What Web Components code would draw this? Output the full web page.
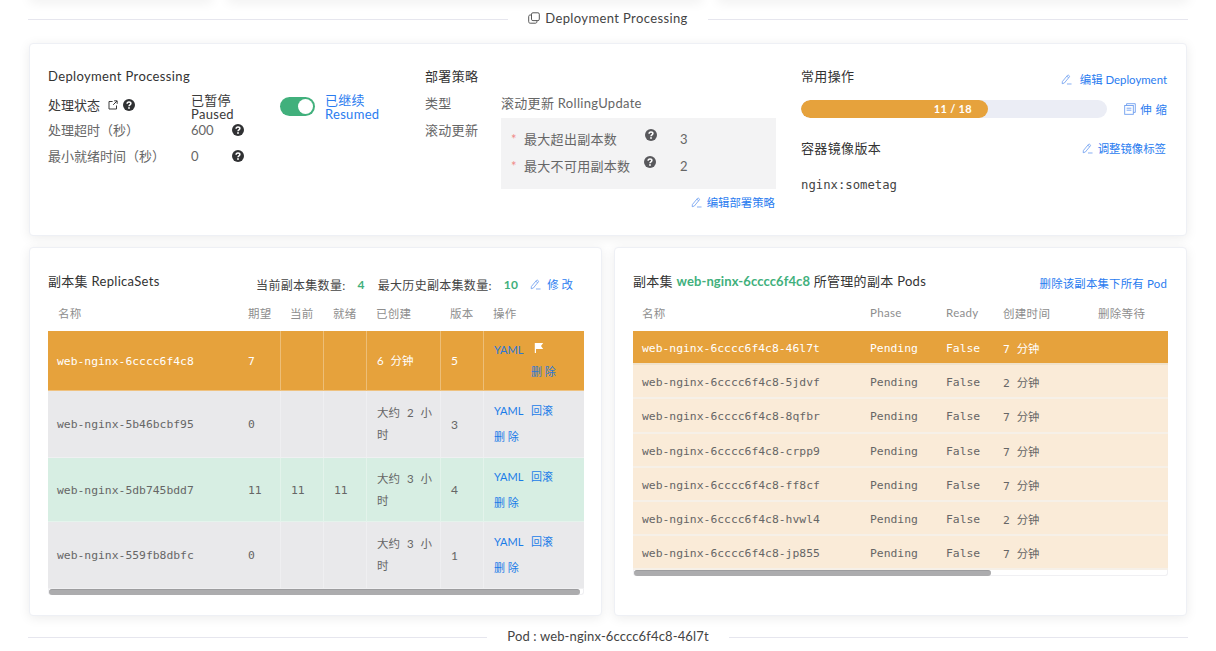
<!DOCTYPE html>
<html lang="zh">
<head>
<meta charset="utf-8">
<title>Deployment Processing</title>
<style>
  html, body {
    margin: 0;
    height: 651px;
    overflow: hidden;
    background: #fff;
    font-family: Lato, "Noto Sans CJK SC", sans-serif;
    font-size: 13px;
    color: #333;
  }
</style>
</head>
<body>
<app-page></app-page>
<script>
const MONO = `"DejaVu Sans Mono", "Noto Sans CJK SC", monospace`;

// Every icon is one line of svg, picked by name
const ICONS = {
  edit: `<svg viewBox="0 0 12 12" fill="none" stroke="currentColor" stroke-width=".9"><path d="M1.5 8.2 7 1.6c.4-.5 1-.5 1.4-.2l.6.5c.4.4.4.9.1 1.3L3.6 9.9l-2.3.7zM6.4 2.4l2 1.7M6.5 10.9h5"/></svg>`,
  copy: `<svg viewBox="0 0 12 12" fill="none" stroke="currentColor" stroke-width=".9"><rect x="3.5" y=".8" width="7.8" height="7.8" rx="1.4"/><path d="M3.5 3H2.2C1.3 3 .7 3.6 .7 4.5v5.2c0 .9.6 1.5 1.5 1.5h5.2c.9 0 1.5-.6 1.5-1.5V8.6"/></svg>`,
  scale: `<svg viewBox="0 0 12 12" fill="none" stroke="currentColor" stroke-width=".9"><rect x=".7" y="2.5" width="8.6" height="8.8"/><path d="M2.6 2.5V.7h8.7v8.7H9.3M2.6 5.2h4.8M2.6 7.2h4.8"/></svg>`,
  ext: `<svg viewBox="0 0 12 12" fill="none" stroke="currentColor" stroke-width="1.2"><path d="M5.5 1.8H1.2v9h9V6.6M6.2 5.8l4.6-4.6M7.4 1h3.6v3.6"/></svg>`,
  flag: `<svg viewBox="0 0 10 10"><path fill="currentColor" d="M.8 0h8.4L7 3l2.2 3H2v4H.8z"/></svg>`,
  help: `<svg viewBox="0 0 12 12"><circle cx="6" cy="6" r="6" fill="currentColor"/><path fill="none" stroke="#fff" stroke-width="1.5" d="M4.1 4.7c0-1.1.8-1.8 1.9-1.8s1.9.7 1.9 1.6c0 1.3-1.9 1.4-1.9 2.7"/><circle cx="6" cy="9" r=".9" fill="#fff"/></svg>`,
};

class UiIcon extends HTMLElement {
  constructor() {
    super();
    this.attachShadow({ mode: 'open' });
    const size = this.getAttribute('size') || 12;
    this.shadowRoot.innerHTML = `
      <style>
        :host { display: inline-flex; flex: none; width: ${size}px; height: ${size}px; }
        svg { width: 100%; height: 100%; display: block; }
      </style>
      ${ICONS[this.getAttribute('name')]}`;
  }
}

class ActionLink extends HTMLElement {
  constructor() {
    super();
    this.attachShadow({ mode: 'open' });
    const name = this.getAttribute('icon') || 'edit';
    const gap = this.getAttribute('gap') || 5;
    this.shadowRoot.innerHTML = `
      <style>
        :host {
          display: inline-flex;
          align-items: center;
          height: 18px;
          font-size: 11.4px;
          color: #2a7cf0;
          white-space: nowrap;
          cursor: pointer;
        }
        ui-icon { color: #6f9ff0; margin-right: ${gap}px; }
      </style>
      <ui-icon name="${name}" size="${name === 'edit' ? 11 : 12}"></ui-icon><slot></slot>`;
  }
}

const dividerTemplate = document.createElement('template');
dividerTemplate.innerHTML = `
<style>
  :host {
    display: flex;
    align-items: center;
    gap: 20px;
    height: 38px;
    color: #444;
    font-size: 13px;
    letter-spacing: .38px;
    white-space: nowrap;
  }
  i { flex: 1; height: 1px; background: #e6e6ee; }
  span { display: inline-flex; align-items: center; gap: 5px; padding-bottom: 2px; }
</style>
<i></i><span><slot></slot></span><i></i>`;

class PageDivider extends HTMLElement {
  constructor() {
    super();
    this.attachShadow({ mode: 'open' });
    this.shadowRoot.appendChild(dividerTemplate.content.cloneNode(true));
  }
}

const cardTemplate = document.createElement('template');
cardTemplate.innerHTML = `
<style>
  :host {
    display: block;
    box-sizing: border-box;
    background: #fff;
    border: 1px solid #eef0f5;
    border-radius: 4px;
    box-shadow: 0 2px 12px 0 rgba(0, 0, 0, .08);
  }
</style>
<slot></slot>`;

class AppCard extends HTMLElement {
  constructor() {
    super();
    this.attachShadow({ mode: 'open' });
    this.shadowRoot.appendChild(cardTemplate.content.cloneNode(true));
  }
}

const panelTemplate = document.createElement('template');
panelTemplate.innerHTML = `
<style>
  :host {
    display: grid;
    grid-template-columns: 377px 376px 366px;
    padding: 23px 0 0 18px;
    height: 191px;
    box-sizing: border-box;
    color: #666;
  }
  h4 { margin: 0; font-size: 13px; font-weight: 400; line-height: 18px; height: 18px; color: #333; letter-spacing: .36px; }
  .row { display: flex; align-items: center; height: 20px; }
  .label { width: 143px; margin-bottom: 2px; }
  .status { height: 27px; margin-top: 8px; color: #3a3a3a; }
  .status .label { display: flex; align-items: center; margin-bottom: 4px; }
  .status .label ui-icon { margin-left: 5px; }
  .status .label ui-icon:first-of-type { margin-left: 8px; }
  .pair { width: 89px; line-height: 14px; letter-spacing: .3px; }
  .pair small { display: block; font-size: 13px; }
  .value { width: 41px; }
  .switch { width: 35px; height: 19px; border-radius: 10px; background: #41b07c; display: flex; align-items: center; justify-content: flex-end; padding-right: 2px; box-sizing: border-box; margin-right: 10px; }
  .switch b { width: 15px; height: 15px; border-radius: 50%; background: #fff; }
  .resumed { color: #2a7cf0; line-height: 14px; letter-spacing: .3px; }
  .resumed small { display: block; font-size: 13px; }
  .gap { margin-top: 6px; }
  ui-icon[name=help] { color: #303133; }

  .kv { display: grid; grid-template-columns: 76px 275px; margin-top: 8px; }
  .kv > div { line-height: 20px; letter-spacing: .3px; }
  .kv .strategy { margin-top: 5px; grid-column: 2; grid-row: 2; }
  .kv .strategy-label { grid-row: 2; margin-top: 7px; }
  .strategy { background: #f3f3f4; padding: 7px 0 10px 10px; box-sizing: border-box; height: 71px; }
  .field { display: flex; align-items: center; height: 27px; }
  .field em { width: 13px; color: #f08a8a; font-style: normal; font-size: 13px; }
  .field span { width: 121px; }
  .field ui-icon { color: #58585c; margin-bottom: 8px; margin-right: 23px; }
  .field + .field ui-icon { margin-left: -1px; margin-right: 24px; }
  .edit-strategy { display: flex; justify-content: flex-end; width: 350px; margin-top: 4px; }

  .head { display: flex; justify-content: space-between; align-items: flex-start; }
  .head action-link { margin-top: 3px; }
  .one { height: 33px; }
  .bar-row { align-items: flex-start; height: 18px; }
  .bar { width: 306px; height: 18px; border-radius: 9px; background: #ebedf5; overflow: hidden; }
  .fill { width: 61.1%; height: 100%; border-radius: 9px; background: #e6a23c; color: #fff; font-size: 11px; font-weight: 700; letter-spacing: .3px; line-height: 18px; text-align: right; padding-right: 16px; box-sizing: border-box; }
  .bar-row action-link { margin-top: 0; }
  .two { margin-top: 21px; }
  .two action-link { margin-top: 0; margin-right: 1px; }
  .image { font-family: ${MONO}; font-size: 12.25px; line-height: 18px; margin-top: 19px; color: #444; }
  .spaced { word-spacing: 1px; }
</style>
<div>
  <h4>Deployment Processing</h4>
  <div class="row status">
    <div class="label">处理状态<ui-icon name="ext" size="10"></ui-icon><ui-icon name="help"></ui-icon></div>
    <div class="pair">已暂停<small>Paused</small></div>
    <div class="switch"><b></b></div>
    <div class="resumed">已继续<small>Resumed</small></div>
  </div>
  <div class="row"><div class="label">处理超时（秒）</div><div class="value">600</div><ui-icon name="help"></ui-icon></div>
  <div class="row gap"><div class="label">最小就绪时间（秒）</div><div class="value">0</div><ui-icon name="help"></ui-icon></div>
</div>
<div>
  <h4>部署策略</h4>
  <div class="kv">
    <div>类型</div>
    <div>滚动更新 RollingUpdate</div>
    <div class="strategy-label">滚动更新</div>
    <div class="strategy">
      <div class="field"><em>*</em><span>最大超出副本数</span><ui-icon name="help"></ui-icon>3</div>
      <div class="field"><em>*</em><span>最大不可用副本数</span><ui-icon name="help"></ui-icon>2</div>
    </div>
  </div>
  <div class="edit-strategy"><action-link>编辑部署策略</action-link></div>
</div>
<div>
  <div class="head one"><h4>常用操作</h4><action-link gap="8">编辑 Deployment</action-link></div>
  <div class="head bar-row">
    <div class="bar"><div class="fill">11 / 18</div></div>
    <action-link icon="scale" gap="4" class="spaced">伸 缩</action-link>
  </div>
  <div class="head two"><h4>容器镜像版本</h4><action-link>调整镜像标签</action-link></div>
  <div class="image">nginx:sometag</div>
</div>`;

class DeployPanel extends HTMLElement {
  constructor() {
    super();
    this.attachShadow({ mode: 'open' });
    this.shadowRoot.appendChild(panelTemplate.content.cloneNode(true));
  }
}

// Table styles shared by both tables
const tableStyles = `
  table { border-collapse: separate; border-spacing: 0; table-layout: fixed; width: 100%; }
  th { height: 35px; padding: 0 0 2px 10px; box-sizing: border-box; text-align: left; font-size: 11.5px; font-weight: 400; color: #8e8e8e; letter-spacing: .3px; }
  td { padding: 0 0 0 10px; box-sizing: border-box; color: #666; }
  .mono { font-family: ${MONO}; font-size: 11.375px; }
  .warn td { background: #e6a23c; color: #fff; }
  .scroll { height: 6px; background: #fff; border: 1px solid #f0f0f3; border-width: 0 1px 1px; box-sizing: border-box; border-radius: 0 0 3px 3px; }
  .scroll b { display: block; height: 6px; background: #acacae; border-radius: 3px; border-top: 1px solid #9d9d9f; box-sizing: border-box; }
`;

const rsRows = [
  { cls: 'warn', h: 60, name: 'web-nginx-6cccc6f4c8', want: 7, cur: '', ready: '', age: '6 分钟', rev: 5, active: true },
  { cls: 'grey', h: 67, name: 'web-nginx-5b46bcbf95', want: 0, cur: '', ready: '', age: '大约 2 小<br>时', rev: 3 },
  { cls: 'ok', h: 64, name: 'web-nginx-5db745bdd7', want: 11, cur: 11, ready: 11, age: '大约 3 小<br>时', rev: 4 },
  { cls: 'grey', h: 67, name: 'web-nginx-559fb8dbfc', want: 0, cur: '', ready: '', age: '大约 3 小<br>时', rev: 1 },
];

class ReplicaTable extends HTMLElement {
  constructor() {
    super();
    this.attachShadow({ mode: 'open' });
    const rows = rsRows.map((r) => `
      <tr class="${r.cls}" style="height:${r.h}px">
        <td class="mono name">${r.name}</td>
        <td class="mono">${r.want}</td>
        <td class="mono">${r.cur}</td>
        <td class="mono">${r.ready}</td>
        <td class="age">${r.age}</td>
        <td class="rev">${r.rev}</td>
        <td>${r.active
          ? `<div class="ops tight"><a>YAML</a><ui-icon name="flag" size="10"></ui-icon><a class="del moved">删 除</a></div>`
          : `<div class="ops"><a>YAML</a><a>回滚</a><a class="del">删 除</a></div>`}</td>
      </tr>`).join('');
    this.shadowRoot.innerHTML = `
      <style>
        :host { display: block; padding: 24px 17px 0 18px; }
        ${tableStyles}
        .top { display: flex; align-items: flex-start; height: 24px; padding-right: 11px; }
        .title { font-size: 13px; line-height: 18px; color: #333; letter-spacing: .3px; }
        .stats { margin-left: auto; display: flex; align-items: center; height: 18px; margin-top: 3px; font-size: 12px; letter-spacing: .3px; color: #444; white-space: nowrap; }
        .stats b { color: #41b07c; font-weight: 700; }
        .stats b.first { margin: 0 13px 0 12px; }
        .stats b.second { margin: 0 12px 0 12px; }
        .stats action-link { letter-spacing: 0; }
        .name { padding-left: 9px; }
        td + td + td { border-left: 1px solid rgba(255, 255, 255, .3); }
        tr td { border-bottom: 1px solid rgba(255, 255, 255, .35); }
        .grey td { background: #e9e9eb; }
        .ok td { background: #d7eee3; }
        .age { font-size: 11.5px; word-spacing: 4px; line-height: 22px; }
        .rev { font-size: 12px; }
        .warn .ops a { color: #2a78d8; }
        .ops { display: grid; grid-template-columns: 37px 1fr; row-gap: 8px; font-size: 11px; line-height: 18px; color: #1a7ce8; }
        .ops.tight { row-gap: 4px; }
        .ops a { white-space: nowrap; }
        .ops .del { grid-column: 1 / 3; }
        .ops .moved { grid-column: 2; }
        .ops ui-icon { color: #fff; margin-top: 2px; margin-left: 3px; }
      </style>
      <div class="top">
        <div class="title">副本集 ReplicaSets</div>
        <div class="stats">当前副本集数量:<b class="first">4</b>最大历史副本集数量:<b class="second">10</b><action-link gap="6">修 改</action-link></div>
      </div>
      <table>
        <colgroup><col style="width:190px"><col style="width:42px"><col style="width:43px"><col style="width:43px"><col style="width:74px"><col style="width:43px"><col style="width:101px"></colgroup>
        <thead><tr><th>名称</th><th>期望</th><th>当前</th><th>就绪</th><th>已创建</th><th>版本</th><th>操作</th></tr></thead>
        <tbody>${rows}</tbody>
      </table>
      <div class="scroll"><b style="width:531px"></b></div>`;
  }
}

const podRows = [
  ['46l7t', '7 分钟'], ['5jdvf', '2 分钟'], ['8qfbr', '7 分钟'], ['crpp9', '7 分钟'],
  ['ff8cf', '7 分钟'], ['hvwl4', '2 分钟'], ['jp855', '7 分钟'],
];

class PodTable extends HTMLElement {
  constructor() {
    super();
    this.attachShadow({ mode: 'open' });
    const rows = podRows.map(([id, age], i) => `
      <tr class="${i === 0 ? 'warn' : 'pod'}">
        <td class="mono first">web-nginx-6cccc6f4c8-${id}</td>
        <td class="mono">Pending</td>
        <td class="mono">False</td>
        <td class="mono">${age}</td>
        <td></td>
      </tr>`).join('');
    this.shadowRoot.innerHTML = `
      <style>
        :host { display: block; padding: 24px 18px 0 18px; }
        ${tableStyles}
        .top { display: flex; justify-content: space-between; align-items: flex-start; height: 24px; padding-right: 1px; }
        .title { font-size: 13px; line-height: 18px; color: #333; letter-spacing: .3px; }
        .title b { color: #41b07c; font-weight: 700; letter-spacing: .1px; }
        a { font-size: 11.4px; line-height: 18px; margin-top: 3px; color: #2a7cf0; letter-spacing: .2px; }
        .first, th:first-child { padding-left: 9px; }
        tr td { height: 34.2px; padding-top: 2px; border-bottom: 2px solid #f6f0e8; }
        .warn td { border-bottom-color: #f0e2cc; }
        .pod td { background: #faebd8; }
      </style>
      <div class="top">
        <div class="title">副本集 <b>web-nginx-6cccc6f4c8</b> 所管理的副本 Pods</div>
        <a>删除该副本集下所有 Pod</a>
      </div>
      <table>
        <colgroup><col style="width:227px"><col style="width:76px"><col style="width:57px"><col style="width:95px"><col style="width:80px"></colgroup>
        <thead><tr><th>名称</th><th>Phase</th><th>Ready</th><th>创建时间</th><th>删除等待</th></tr></thead>
        <tbody>${rows}</tbody>
      </table>
      <div class="scroll"><b style="width:357px"></b></div>`;
  }
}

const pageTemplate = document.createElement('template');
pageTemplate.innerHTML = `
<style>
  :host { display: block; padding: 0 28px; }
  .above { display: grid; grid-template-columns: 184px 476px 472px; gap: 14px; height: 8px; margin: -8px 1px 0; }
  .first { margin: 5px 1px 0; height: 193px; }
  .pair { display: grid; grid-template-columns: 573px 573px; gap: 12px; margin: 11px 1px 0; }
  .pair app-card { height: 369px; }
  .foot { margin-top: 2px; letter-spacing: .14px; }
</style>
<div class="above"><app-card></app-card><app-card></app-card><app-card></app-card></div>
<page-divider><ui-icon name="copy" size="12"></ui-icon>Deployment Processing</page-divider>
<app-card class="first"><deploy-panel></deploy-panel></app-card>
<div class="pair">
  <app-card><replica-table></replica-table></app-card>
  <app-card><pod-table></pod-table></app-card>
</div>
<page-divider class="foot">Pod : web-nginx-6cccc6f4c8-46l7t</page-divider>`;

class AppPage extends HTMLElement {
  constructor() {
    super();
    this.attachShadow({ mode: 'open' });
    this.shadowRoot.appendChild(pageTemplate.content.cloneNode(true));
  }
}

customElements.define('ui-icon', UiIcon);
customElements.define('action-link', ActionLink);
customElements.define('page-divider', PageDivider);
customElements.define('app-card', AppCard);
customElements.define('deploy-panel', DeployPanel);
customElements.define('replica-table', ReplicaTable);
customElements.define('pod-table', PodTable);
customElements.define('app-page', AppPage);
</script>
</body>
</html>
